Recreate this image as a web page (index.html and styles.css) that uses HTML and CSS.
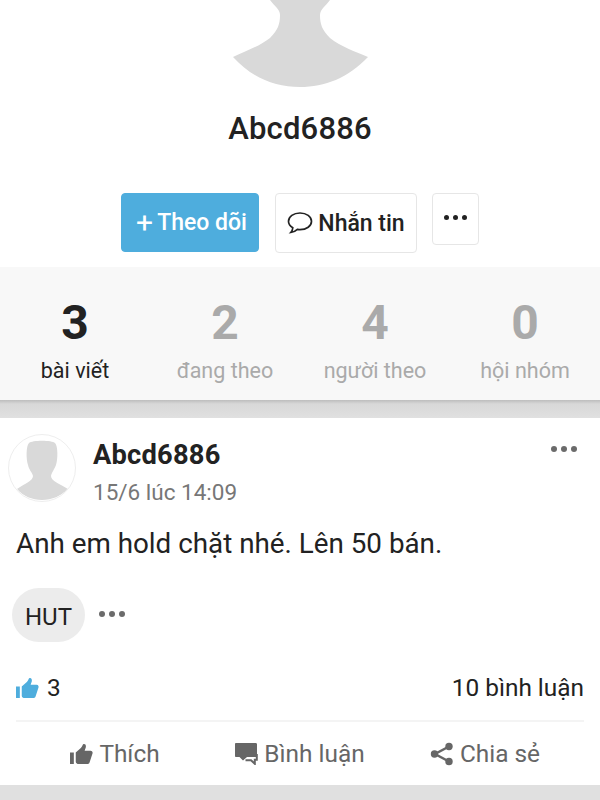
FILE: index.html
```html
<!DOCTYPE html>
<html lang="vi">
<head>
<meta charset="utf-8">
<title>Abcd6886</title>
<link rel="stylesheet" href="styles.css">
</head>
<body>
<div class="page">
  <section class="profile">
    <svg class="hero-avatar" width="140" height="87" viewBox="0 0 140 87"><path class="fill-grey" d="M40 0C44 6 50 9 50 15C50 24 48 30 40 38C30 46 14 52 3 57C22 78 45 87 70 87C95 87 118 78 138 57C126 52 110 46 100 38C92 30 90 24 90 15C90 9 96 6 100 0Z"/></svg>
    <h1 class="profile-name">Abcd6886</h1>
    <div class="actions">
      <button class="btn btn-follow"><span class="plus">+</span>Theo dõi</button>
      <button class="btn btn-msg">
        <svg width="26" height="24" viewBox="0 0 26 24"><path class="stroke-dark" d="M13 2C6.500 2 1.500 5.600 1.500 10.300C1.500 13 3.200 15.300 5.800 16.800C5.700 18.500 5 20.200 3.800 21.500C6.500 21.200 8.700 20 10.400 18.400C11.300 18.500 12.100 18.600 13 18.600C19.500 18.600 24.500 15 24.500 10.300C24.500 5.600 19.500 2 13 2Z"/></svg>
        Nhắn tin
      </button>
      <button class="btn btn-more" aria-label="more"><span class="dots dots-dark"><i></i><i></i><i></i></span></button>
    </div>
  </section>

  <section class="stats">
    <div class="stat stat-active"><div class="stat-num">3</div><div class="stat-label">bài viết</div></div>
    <div class="stat"><div class="stat-num">2</div><div class="stat-label">đang theo</div></div>
    <div class="stat"><div class="stat-num">4</div><div class="stat-label">người theo</div></div>
    <div class="stat"><div class="stat-num">0</div><div class="stat-label">hội nhóm</div></div>
  </section>
  <div class="separator"></div>

  <article class="post">
    <header class="post-head">
      <div class="post-avatar">
        <svg width="68" height="68" viewBox="0 0 68 68"><path class="fill-grey" d="M21 9C24 6 44 6 47 9C50 12 50 25 48 31C46 36 44 38 43 42C43 47 52 50 60 55C53 62 44 66 34 66C24 66 15 62 9 55C16 50 25 47 25 42C24 38 21 36 20 31C18 25 18 12 21 9Z"/></svg>
      </div>
      <div class="post-meta">
        <div class="post-author">Abcd6886</div>
        <div class="post-time">15/6 lúc 14:09</div>
      </div>
      <span class="dots dots-grey post-menu"><i></i><i></i><i></i></span>
    </header>
    <p class="post-body">Anh em hold chặt nhé. Lên 50 bán.</p>
    <div class="tags">
      <span class="tag">HUT</span>
      <span class="dots dots-grey"><i></i><i></i><i></i></span>
    </div>
    <div class="counts">
      <span class="likes">
        <svg class="fill-blue" width="23" height="22" viewBox="0 0 24 22"><use href="#thumb"/></svg>
        3
      </span>
      <span>10 bình luận</span>
    </div>
    <div class="post-actions">
      <span class="post-action">
        <svg width="23" height="22" viewBox="0 0 24 22"><use href="#thumb"/></svg>Thích
      </span>
      <span class="post-action">
        <svg width="23" height="22" viewBox="0 0 23 22"><path d="M1 0H20.500C21.500 0 22 .5 22 1.500V14H12L8 17.500L4.500 14H1C.4 14 0 13.500 0 13V1C0 .5 .4 0 1 0Z"/><path class="comment-back" d="M21.800 11V16.800H19.800V20.800L16 17.200H10.500"/></svg>Bình luận
      </span>
      <span class="post-action">
        <svg width="24" height="24" viewBox="0 0 24 24"><path class="share-line" d="M19 4.500L5 12L19 19.500"/><circle cx="19" cy="4.500" r="3.700"/><circle cx="4.500" cy="12" r="3.700"/><circle cx="19" cy="19.500" r="3.700"/></svg>Chia sẻ
      </span>
    </div>
  </article>
  <div class="footer-bar"></div>
</div>
<svg class="defs" width="0" height="0"><defs><symbol id="thumb" viewBox="0 0 24 22"><path d="M0 9.500H4V21.500H0Z"/><path d="M6 9.500L11 5C12.500 3.500 13 2 13.500 1C15.500 0 17 1.500 16.500 4C16.200 5.500 15.500 6.500 15.300 7.500H21.500C23.500 7.500 24 9.500 23.300 11L20.500 19.500C20 21 19 21.500 17.500 21.500H9C7.500 21.500 6 20.500 6 19Z"/></symbol></defs></svg>
</body>
</html>
```
FILE: styles.css
```css
* { box-sizing: border-box; }
html, body { margin: 0; padding: 0; background: #fff; }
body { font-family: Roboto, "Noto Sans", sans-serif; color: #222; overflow: hidden; }
.page { width: 600px; height: 800px; overflow: hidden; display: flex; flex-direction: column; }
.defs { position: absolute; }
.fill-grey { fill: #d9d9d9; }
.fill-blue { fill: #4eaddd; }
.stroke-dark { fill: none; stroke: #222; stroke-width: 1.700; }

.profile { height: 267px; display: flex; flex-direction: column; align-items: center; }
.hero-avatar { display: block; }
.profile-name { margin: 22px 0 0; font-size: 31px; line-height: 40px; font-weight: 500; color: #222; letter-spacing: .2px; }
.actions { display: flex; align-items: flex-start; gap: 16px; margin-top: 44px; }
.btn { font-family: inherit; font-size: 24px; font-weight: 500; border-radius: 4px; background: #fff; border: 1px solid #e6e6e6; display: flex; align-items: center; justify-content: center; padding: 0; color: #222; }
.btn-follow { width: 138px; height: 59px; padding-left: 3px; background: #4eaddd; border-color: #4eaddd; color: #fff; font-size: 23px; font-weight: 500; }
.plus { font-size: 30px; font-weight: 400; margin-right: 4px; line-height: 1; }
.btn-msg { width: 142px; height: 60px; gap: 5px; font-size: 23px; }
.btn-more { width: 47px; height: 52px; margin-left: -1px; padding-bottom: 4px; }
.dots { display: inline-flex; gap: 4px; }
.dots i { display: block; width: 6px; height: 6px; border-radius: 50%; }
.dots-dark i { background: #222; width: 5px; height: 5px; }
.dots-grey i { background: #6b6b6b; }

.stats { height: 133px; background: #f8f8f8; display: grid; grid-template-columns: repeat(4, 150px); }
.stat { text-align: center; color: #aaa; padding-top: 26px; }
.stat-num { font-size: 48px; font-weight: 700; line-height: 60px; }
.stat-label { font-size: 21.500px; line-height: 28px; margin-top: 4px; }
.stat-active { color: #222; }
.separator { height: 18px; background: linear-gradient(#bdbdbd, #d8d8d8 22%, #e0e0e0); }

.post { flex: 1; padding: 16px 16px 0; display: flex; flex-direction: column; min-height: 0; }
.post-head { display: flex; position: relative; margin-left: -8px; height: 68px; }
.post-avatar { width: 68px; height: 68px; border-radius: 50%; border: 1px solid #eee; overflow: hidden; flex: none; }
.post-avatar svg { display: block; margin: -1px; }
.post-meta { margin-left: 17px; padding-top: 3px; }
.post-author { font-size: 27.300px; font-weight: 700; line-height: 36px; color: #222; letter-spacing: .2px; }
.post-time { font-size: 22.500px; line-height: 28px; color: #777; margin-top: 5px; }
.post-menu { position: absolute; right: 7px; top: 12px; }
.post-body { margin: 25px 0 0; font-size: 27.800px; line-height: 34px; color: #222; }
.tags { display: flex; align-items: center; margin: 27px 0 0 -4px; gap: 14px; }
.tag { width: 73px; height: 54px; padding-top: 3px; border-radius: 27px; background: #ececec; display: flex; align-items: center; justify-content: center; font-size: 24px; color: #222; }
.tags .dots { margin-top: -2px; }
.counts { display: flex; justify-content: space-between; align-items: center; font-size: 24.400px; line-height: 32px; color: #222; margin-top: 30px; padding-bottom: 16px; border-bottom: 2px solid #f4f4f4; }
.likes { display: flex; align-items: center; gap: 8px; }
.post-actions { display: grid; grid-template-columns: repeat(3, 185px); justify-content: center; justify-items: center; padding-top: 16px; color: #666; fill: #666; font-size: 24.400px; line-height: 32px; }
.post-action { display: flex; align-items: center; gap: 6px; }
.comment-back { fill: none; stroke: #666; stroke-width: 2; }
.share-line { fill: none; stroke: #666; stroke-width: 2.500; }
.footer-bar { height: 15px; background: #e0e0e0; flex: none; }
```
